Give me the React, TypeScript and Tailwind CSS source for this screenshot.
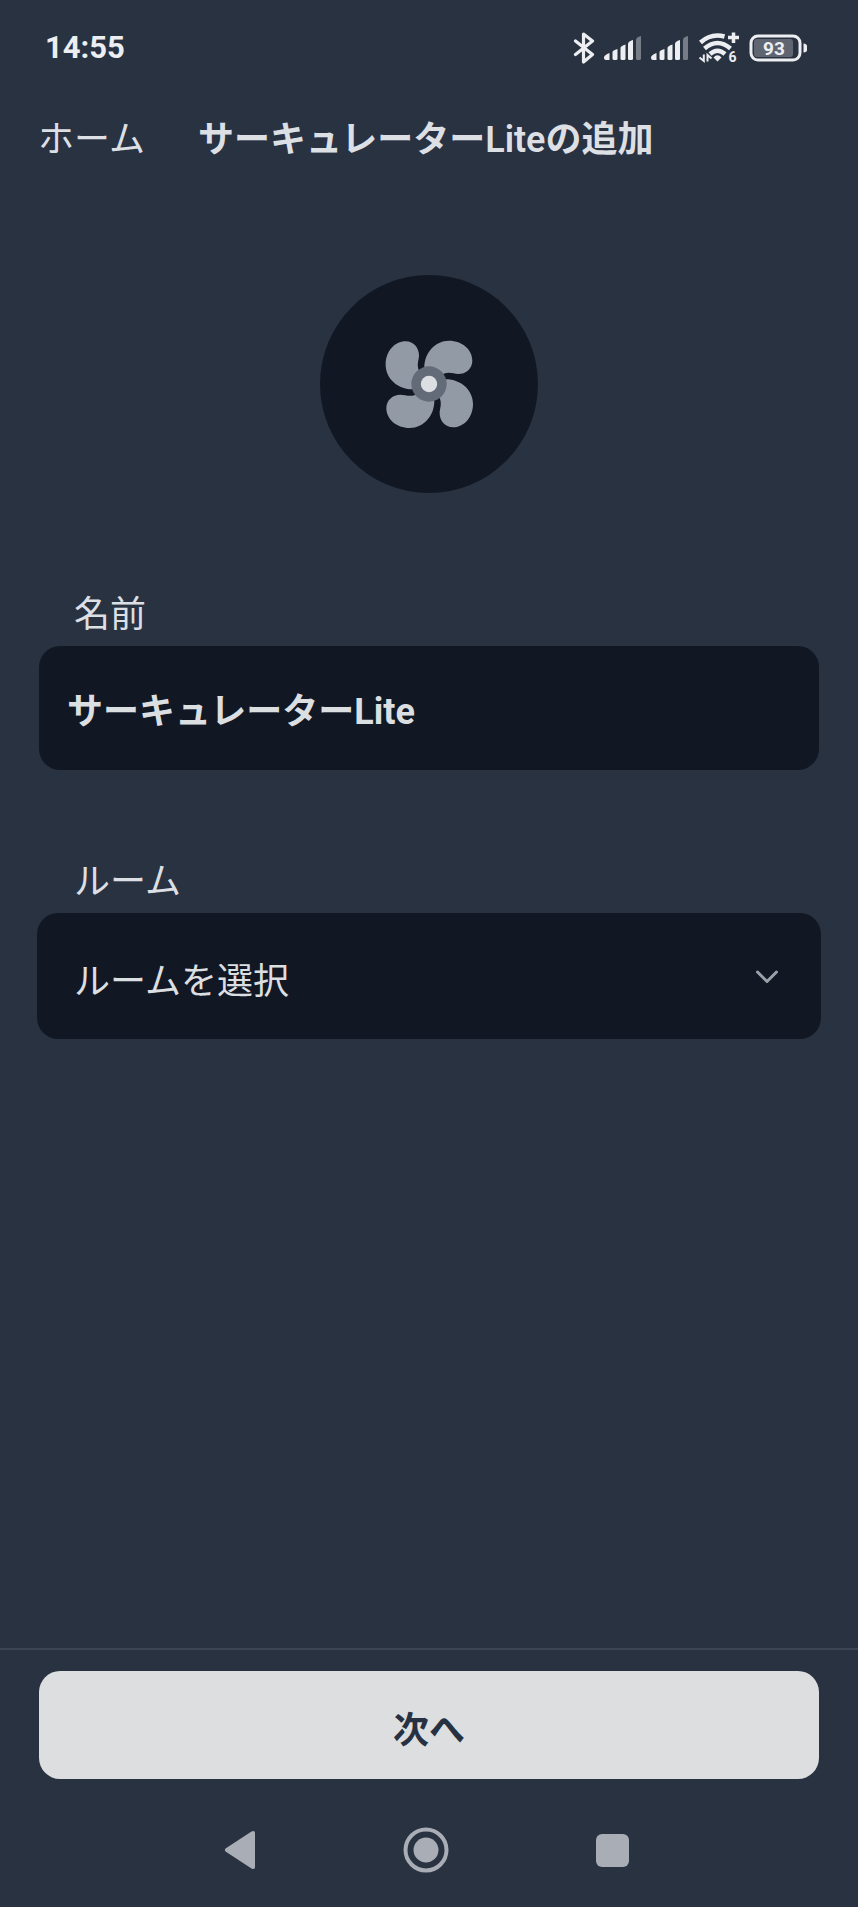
import { useState } from "react";

function BluetoothIcon() {
  return (
    <svg width="22" height="32" viewBox="0 0 22 32" fill="none" stroke="currentColor" strokeWidth="3.2" strokeLinecap="round" strokeLinejoin="round" role="img" aria-label="Bluetooth">
      <path d="M2.5 9 L19.500 22.500 L10.500 30 V2 L19.500 9 L2.5 22.500" />
    </svg>
  );
}

function SignalIcon() {
  return (
    <svg width="38" height="24" viewBox="0 0 38 24" fill="currentColor" role="img" aria-label="電波強度">
      <path d="M0 21.5 Q0 19 5.5 17 V24 H2 Q0 24 0 22Z" />
      <path d="M8.5 16 Q8.5 14.500 13.500 13 V22.500 Q13.500 24 12 24 H10 Q8.500 24 8.500 22.500Z" />
      <path d="M16.500 12 Q16.500 10 21.500 8.500 V22.500 Q21.500 24 20 24 H18 Q16.500 24 16.500 22.500Z" />
      <path d="M24 8 Q24 5.500 29 4 V22.500 Q29 24 27.500 24 H25.500 Q24 24 24 22.500Z" />
      <path opacity="0.4" d="M32 4 Q32 1 37 0 V22.500 Q37 24 35.500 24 H33.500 Q32 24 32 22.500Z" />
    </svg>
  );
}

function WifiIcon() {
  return (
    <svg width="42" height="36" viewBox="0 -2 42 36" fill="none" stroke="currentColor" role="img" aria-label="Wi-Fi 6">
      <path d="M2.500 10.500 Q13 1 26.500 4.500" strokeWidth="4.500" />
      <path d="M6.500 16.500 Q19.500 5.500 32.500 16.500" strokeWidth="4.500" />
      <path d="M12 22 Q19.500 15.500 27 22" strokeWidth="4.500" />
      <path d="M15.500 25.500 Q19.500 21 23.500 25.500 L19.500 29.500Z" fill="currentColor" stroke="none" />
      <path d="M35.500 0.500 V11 M30 5.500 H41" strokeWidth="3.500" />
      <path d="M5.800 22.500 V29 L1.500 25.500 M9.500 29.500 V23 L13.500 26.500" strokeWidth="2" />
      <text x="30.500" y="30" fill="currentColor" stroke="none" className="font-['Roboto',sans-serif] text-[14px] leading-none font-bold">6</text>
    </svg>
  );
}

function BatteryIcon() {
  return (
    <svg width="58" height="28" viewBox="0 0 58 28" fill="none" role="img" aria-label="バッテリー 93%">
      <rect x="2" y="2" width="49" height="24" rx="7" stroke="currentColor" strokeWidth="3" />
      <rect x="5" y="5" width="39" height="18" rx="3" fill="currentColor" opacity="0.28" />
      <path d="M54.500 9.500 Q58 10 58 12 V16 Q58 18 54.500 18.500Z" fill="currentColor" />
      <text x="25" y="21" textAnchor="middle" fill="currentColor" className="font-['Roboto',sans-serif] text-[19px] leading-none font-bold">93</text>
    </svg>
  );
}

function FanIcon() {
  const blade = "M344 306 C344 262 376 225 418 225 C458 225 488 252 488 285 C488 309 468 325 446 325 C432 325 420 318 402 324 L358 355Z";
  return (
    <svg width="90" height="90" viewBox="223 220 270 270" aria-hidden="true">
      <g fill="#929aa6">
        <path d={blade} />
        <path d={blade} transform="rotate(90 359 356)" />
        <path d={blade} transform="rotate(180 359 356)" />
        <path d={blade} transform="rotate(270 359 356)" />
      </g>
      <circle cx="358" cy="355" r="53" fill="#646b78" />
      <circle cx="358" cy="355" r="24.500" fill="#dcdfe1" />
    </svg>
  );
}

export default function App() {
  const [name, setName] = useState("サーキュレーターLite");
  const [room, setRoom] = useState("");

  return (
    <div className="flex min-h-screen flex-col bg-[#293241] font-['Roboto','Noto_Sans_CJK_JP',sans-serif] text-[36px] leading-[52px] text-[#dcdfe4]">
      <div className="flex h-24 items-center justify-between pr-[51px] pl-[45px] text-[#eceef1]">
        <time className="text-[31px] font-bold">14:55</time>
        <div className="flex items-center gap-[9px]">
          <BluetoothIcon />
          <SignalIcon />
          <SignalIcon />
          <WifiIcon />
          <BatteryIcon />
        </div>
      </div>

      <header className="flex h-[88px] items-center gap-[53px] px-[38px]">
        <a href="#home">ホーム</a>
        <h1 className="font-semibold">サーキュレーターLiteの追加</h1>
      </header>

      <main className="flex flex-1 flex-col px-[39px] pt-[91px]">
        <div className="flex size-[218px] items-center justify-center self-center rounded-full bg-[#121823]">
          <FanIcon />
        </div>

        <label htmlFor="name" className="mt-24 px-[35px]">名前</label>
        <input
          id="name"
          type="text"
          value={name}
          onChange={(e) => setName(e.target.value)}
          className="mt-[5px] h-[124px] rounded-[21px] bg-[#121823] px-7 font-bold text-[#dcdfe1] outline-none"
        />

        <label htmlFor="room" className="mt-[86px] px-[35px]">ルーム</label>
        <div className="relative -mx-[2px] mt-[5px]">
          <select
            id="room"
            value={room}
            onChange={(e) => setRoom(e.target.value)}
            className="h-[126px] w-full appearance-none rounded-[21px] bg-[#121823] pt-3 pr-20 pl-[37px] text-[#dcdfe1] outline-none"
          >
            <option value="">ルームを選択</option>
          </select>
          <svg className="pointer-events-none absolute top-[57px] right-[42px]" width="24" height="14" viewBox="0 0 24 14" fill="none" stroke="#9ca1a9" strokeWidth="3" strokeLinecap="round" strokeLinejoin="round" aria-hidden="true">
            <path d="M2.500 2 L12 11.500 L21.500 2" />
          </svg>
        </div>
      </main>

      <footer>
        <div className="border-t-2 border-[#3c4553] px-[39px] pt-[21px]">
          <button type="button" className="h-[108px] w-full rounded-[21px] bg-[#dcdee0] pt-3 font-semibold text-[#263142]">
            次へ
          </button>
        </div>
        <nav className="flex h-32 items-center justify-center gap-[147px] pt-[14px] pr-[6px] text-[#a9adb5]">
          <button type="button" aria-label="戻る">
            <svg width="32" height="40" viewBox="0 0 32 40" fill="currentColor">
              <path d="M1.500 18.500 L27.500 1.500 Q31 0 31 3 V37 Q31 40 27.500 38.500 L1.500 21.500 Q0 20 1.500 18.500Z" />
            </svg>
          </button>
          <button type="button" aria-label="ホーム画面">
            <svg width="46" height="46" viewBox="0 0 46 46">
              <circle cx="23" cy="23" r="20.500" fill="none" stroke="currentColor" strokeWidth="4" />
              <circle cx="23" cy="23" r="12.500" fill="currentColor" />
            </svg>
          </button>
          <button type="button" aria-label="最近使ったアプリ">
            <svg width="33" height="33" viewBox="0 0 33 33">
              <rect width="33" height="33" rx="6" fill="currentColor" />
            </svg>
          </button>
        </nav>
      </footer>
    </div>
  );
}
